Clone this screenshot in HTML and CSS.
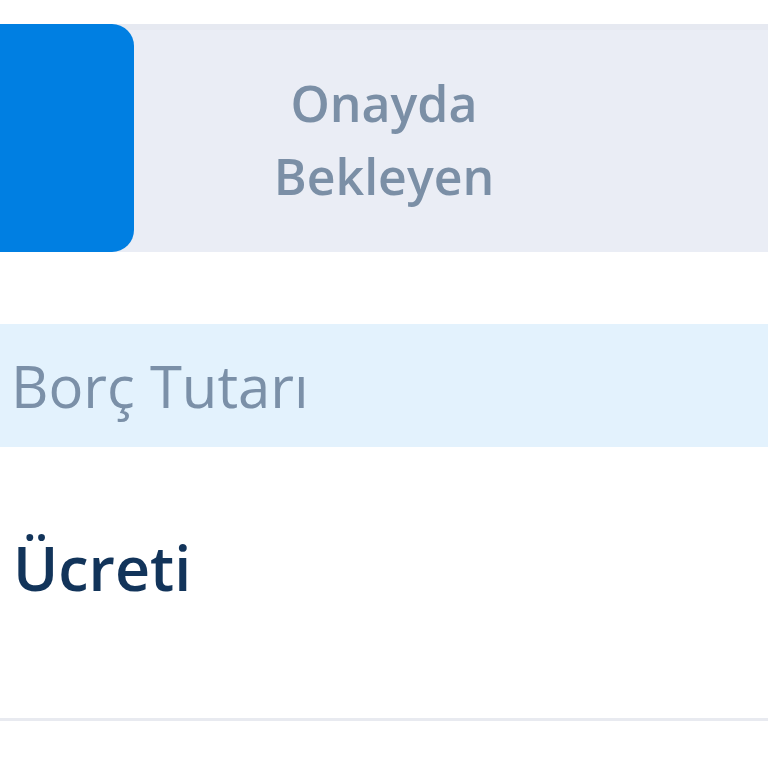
FILE: index.html
```html
<!DOCTYPE html>
<html lang="tr">

<head>
    <meta charset="UTF-8">
    <meta name="viewport" content="width=device-width,initial-scale=1">
    <title>Borç</title>
    <link rel="stylesheet" href="styles.css">
</head>

<body>
    <div class="page">
        <div class="tabs">
            <div class="tab active"></div>
            <div class="tab">
                <span>Onayda<br>Bekleyen</span>
            </div>
        </div>
        <div class="section-title">Borç Tutarı</div>
        <div class="row">
            <h2>Ücreti</h2>
        </div>
    </div>
</body>

</html>
```

FILE: styles.css
```css
* {
    padding: 0;
    margin: 0;
    box-sizing: border-box;
}

body,
html {
    width: 100%;
    height: 100%;
    background: #fff;
    font-family: "Open Sans", "Noto Sans", sans-serif;
}

.page {
    padding-top: 24px;
}

.tabs {
    display: flex;
    height: 228px;
    background: #eaedf5;
    border-top: 6px solid #e6e9f1;
}

.tab {
    flex: 1;
    display: flex;
    align-items: center;
    justify-content: center;
    padding-right: 134px;
}

.tab.active {
    flex: 0 0 134px;
    margin-top: -6px;
    padding-right: 0;
    background: #007fe2;
    border-radius: 0 22px 22px 0;
}

.tab span {
    color: #7b8fa6;
    font-size: 50px;
    font-weight: 600;
    line-height: 73px;
    text-align: center;
    margin-top: -2px;
}

.section-title {
    margin-top: 72px;
    height: 123px;
    background: #e3f2fd;
    color: #7b90a8;
    font-size: 58px;
    line-height: 123px;
    padding-left: 11px;
}

.row {
    height: 274px;
    border-bottom: 3px solid #e8eaf0;
    padding: 76px 0 0 13px;
}

.row h2 {
    color: #12345a;
    font-size: 61px;
    font-weight: 600;
    line-height: 90px;
}
```
